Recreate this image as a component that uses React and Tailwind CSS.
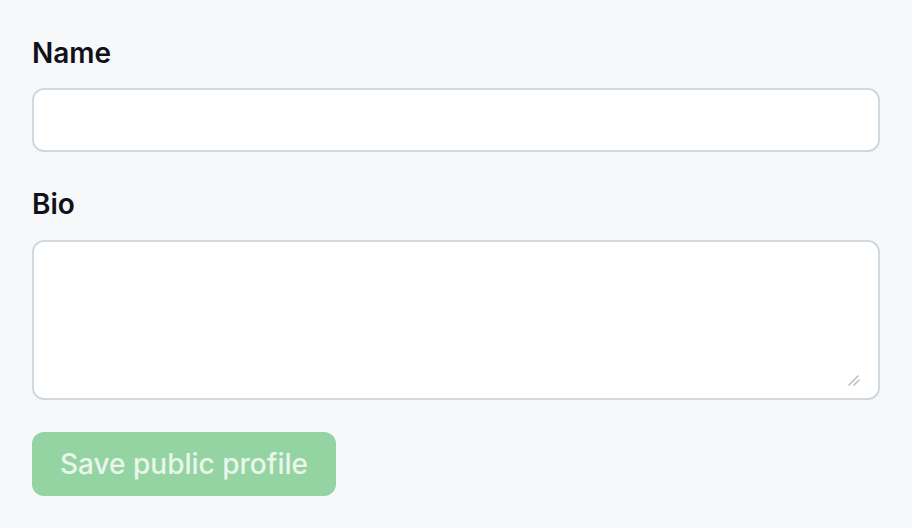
export default function App() {
  return (
    <div
      className="min-h-[528px] w-full bg-[#f6f8fa] px-8 pt-8"
      style={{ fontFamily: 'Inter, "Noto Sans", sans-serif' }}
    >
      <label className="block text-[28px] leading-[42px] font-semibold text-[#0f1216]">Name</label>
      <input
        type="text"
        className="mt-[14px] block h-16 w-full rounded-xl border-2 border-[#d1d9e0] bg-white px-4 text-[28px] outline-none"
      />
      <label className="mt-[31px] block text-[28px] leading-[42px] font-semibold text-[#0f1216]">Bio</label>
      <div className="relative mt-[15px]">
        <textarea className="block h-40 w-full resize-none rounded-xl border-2 border-[#d1d9e0] bg-white px-4 py-2 text-[28px] outline-none" />
        <svg
          className="pointer-events-none absolute right-[20px] bottom-[14px]"
          width="12"
          height="12"
          viewBox="0 0 12 12"
        >
          <path d="M1 11 L10 2 M6 11 L11 6" stroke="#b8c0c8" strokeWidth="1.6" strokeLinecap="round" />
        </svg>
      </div>
      <button
        disabled
        className="mt-8 flex h-16 w-[304px] items-center justify-center rounded-xl bg-[#94d3a2] text-[28px] font-medium text-white/80"
      >
        Save public profile
      </button>
    </div>
  );
}
